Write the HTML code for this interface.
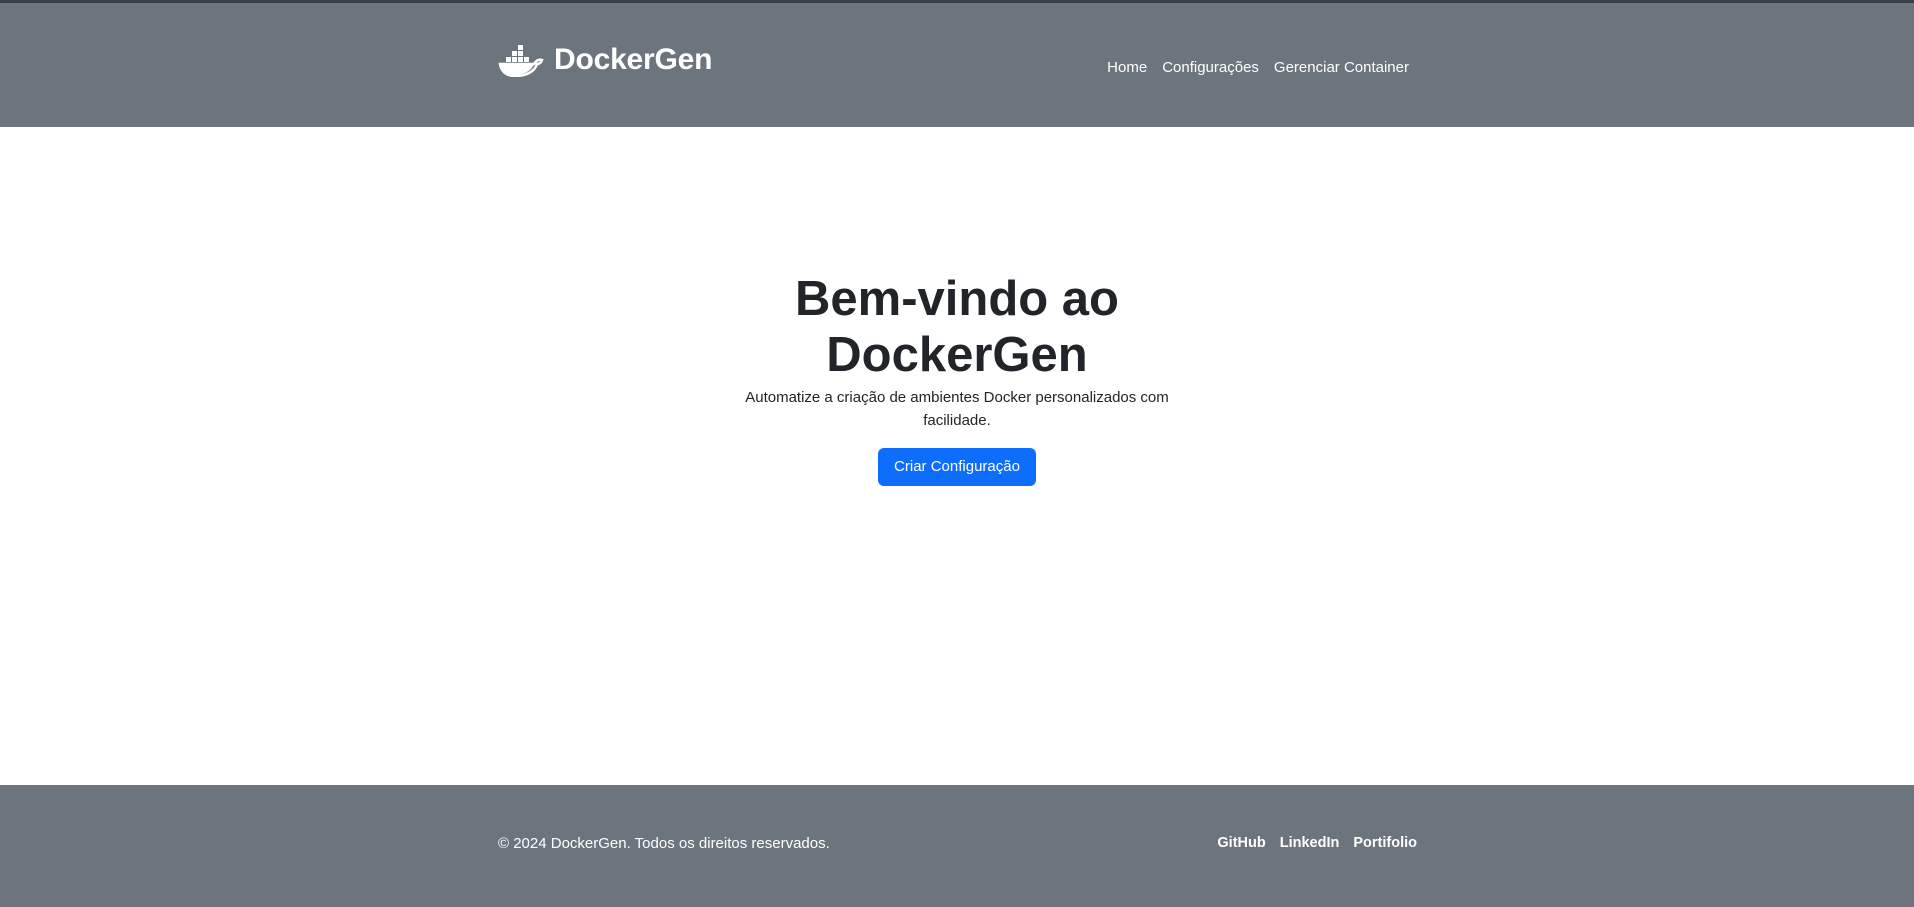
<!DOCTYPE html>
<html><head><meta charset="utf-8"><style>
*{box-sizing:border-box;margin:0;padding:0}
html,body{width:1914px;height:907px;overflow:hidden;font-family:"Liberation Sans",sans-serif;background:#fff;color:#212529}
.hdr{position:absolute;top:0;left:0;width:1914px;height:127px;background:#6c757d;border-top:3px solid #3a4045}
.brand{position:absolute;left:498px;top:40px;display:flex;align-items:center;color:#fff;font-size:30px;font-weight:bold;letter-spacing:-0.2px}
.brand svg{margin-right:10px}
.nav{position:absolute;right:505px;top:56px;font-size:15px;color:#fff}
.nav span{margin-left:15px}
.hero{position:absolute;left:707px;width:500px;top:271px;text-align:center}
.hero h1{font-size:49px;font-weight:bold;line-height:56px;color:#212529}
.hero p{font-size:15px;line-height:23px;margin-top:3px;padding:0 20px}
.btn{display:inline-block;margin-top:16px;background:#0d6efd;color:#fff;border-radius:6px;width:158px;height:38px;line-height:38px;font-size:15px}
.ftr{position:absolute;top:785px;left:0;width:1914px;height:122px;background:#6c757d;color:#fff}
.ftr .l{position:absolute;left:498px;top:50px;font-size:15px}
.ftr .r{position:absolute;right:497px;top:50px;font-size:14.5px;font-weight:bold}
.ftr .r span{margin-left:14px}
</style></head><body>
<div class="hdr">
 <div class="brand">
  <svg width="46" height="34" viewBox="0 0 46 34" fill="#fff">
   <rect x="20" y="2" width="5" height="5"/>
   <rect x="14" y="8" width="5" height="5"/><rect x="20" y="8" width="5" height="5"/>
   <rect x="8" y="14" width="5" height="5"/><rect x="14" y="14" width="5" height="5"/><rect x="20" y="14" width="5" height="5"/><rect x="26" y="14" width="5" height="5"/>
   <path d="M2 21h34c2-3 4-5 8-4-1 3-3 4-5 4-2 7-10 12-22 12C8 33 3 28 2 21z" fill="none" stroke="#fff" stroke-width="2.5"/>
   <path d="M3 21h33c-2 6-9 11-20 11C8 32 4 27 3 21z"/>
  </svg>DockerGen</div>
 <div class="nav"><span>Home</span><span>Configurações</span><span>Gerenciar Container</span></div>
</div>
<div class="hero">
 <h1>Bem-vindo ao<br>DockerGen</h1>
 <p>Automatize a criação de ambientes Docker personalizados com facilidade.</p>
 <div class="btn">Criar Configuração</div>
</div>
<div class="ftr">
 <div class="l">© 2024 DockerGen. Todos os direitos reservados.</div>
 <div class="r"><span>GitHub</span><span>LinkedIn</span><span>Portifolio</span></div>
</div>
</body></html>
